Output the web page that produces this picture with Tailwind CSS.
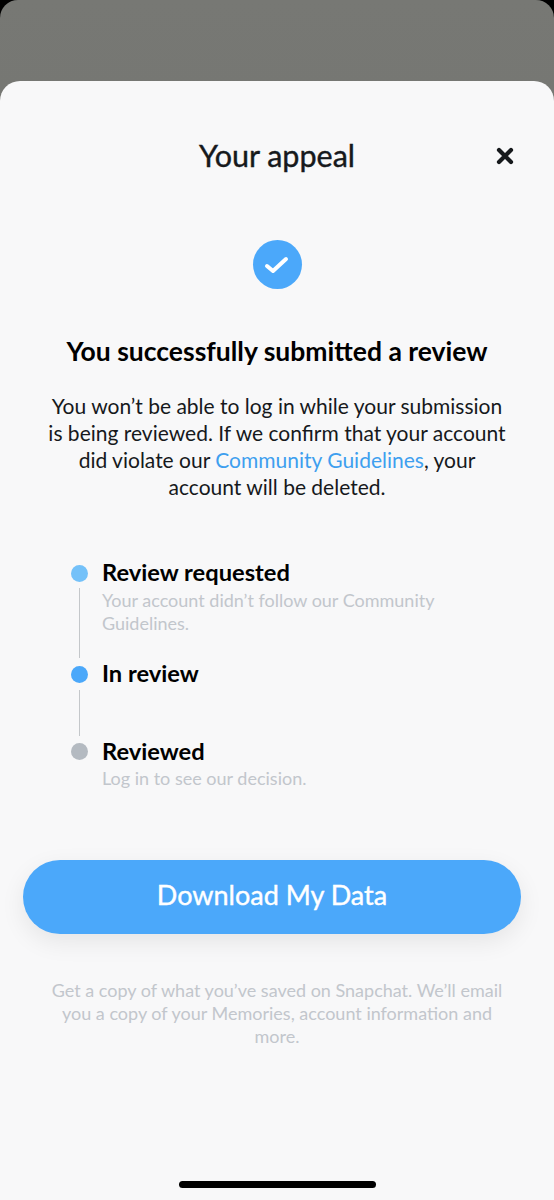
<!DOCTYPE html>
<html lang="en">
<head>
  <meta charset="UTF-8" />
  <meta name="viewport" content="width=device-width, initial-scale=1.0"/>
  <title>Your appeal</title>
  <script src="https://cdn.jsdelivr.net/npm/@tailwindcss/browser@4"></script>
</head>
<body class="bg-black font-['Lato','Noto_Sans',sans-serif]">
  <div class="relative h-[1200px] w-[554px] overflow-hidden rounded-t-[18px] bg-gradient-to-b from-[#777874] to-[#6a6b66] pt-[81px]">

    <!-- Sheet -->
    <div class="h-[1119px] rounded-t-[20px] bg-[#f8f8f9] text-center">

      <!-- Header -->
      <div class="relative h-[150px] pt-[55px]">
        <h1 class="text-[30.5px] leading-[38px] font-normal text-[#16191c] [-webkit-text-stroke:0.4px_#16191c]">Your appeal</h1>
        <button class="absolute top-[66px] left-[496px] text-[#16191c]">
          <svg class="h-[18px] w-[18px]" viewBox="0 0 18 18" fill="none" stroke="currentColor" stroke-width="4.2" stroke-linecap="round"><path d="M3 3l12 12M15 3L3 15"/></svg>
        </button>
      </div>

      <!-- Check -->
      <div class="mx-auto mt-[9px] flex h-[49px] w-[49px] items-center justify-center rounded-full bg-[#4ba8fa]">
        <svg class="h-[26px] w-[26px]" viewBox="0 0 26 26" fill="none" stroke="#fff" stroke-width="4" stroke-linecap="round" stroke-linejoin="round"><path d="M3 14l6 5L22 7"/></svg>
      </div>

      <h2 class="mt-[44px] text-[26.5px] leading-[36px] font-bold text-black">You successfully submitted a review</h2>

      <p class="mx-auto mt-[23px] w-[460px] text-[21px] leading-[27px] text-[#16191c]">You won’t be able to log in while your submission is being reviewed. If we confirm that your account did violate our <span class="text-[#3e9fef]">Community Guidelines</span>, your account will be deleted.</p>

      <!-- Timeline -->
      <div class="mt-[58px] ml-[71px] w-[390px] text-left">
        <div class="flex gap-[14px]">
          <div class="flex w-[17px] flex-col items-center">
            <span class="mt-[7px] h-[17px] w-[17px] rounded-full bg-[#74c1f9]"></span>
            <span class="mt-[6px] h-[70px] w-[1.5px] bg-[#c4c7ca]"></span>
          </div>
          <div>
            <div class="text-[23.7px] leading-[29px] font-bold text-black">Review requested</div>
            <p class="mt-[2px] text-[18px] leading-[23px] text-[#c2c6cc]">Your account didn’t follow our Community Guidelines.</p>
          </div>
        </div>
        <div class="flex gap-[14px]">
          <div class="flex w-[17px] flex-col items-center">
            <span class="mt-[8px] h-[17px] w-[17px] rounded-full bg-[#4ba8fa]"></span>
            <span class="mt-[7px] h-[46px] w-[1.5px] bg-[#c4c7ca]"></span>
          </div>
          <div class="mt-[1px] text-[23.7px] leading-[29px] font-bold text-black">In review</div>
        </div>
        <div class="flex gap-[14px]">
          <div class="w-[17px]">
            <span class="mt-[7px] block h-[17px] w-[17px] rounded-full bg-[#b4bac1]"></span>
          </div>
          <div>
            <div class="mt-[1px] text-[23.7px] leading-[29px] font-bold text-black">Reviewed</div>
            <p class="mt-[1px] text-[18px] leading-[23px] text-[#c2c6cc]">Log in to see our decision.</p>
          </div>
        </div>
      </div>

      <!-- Button -->
      <button class="mt-[70px] ml-[23px] block h-[74px] w-[498px] rounded-full bg-[#4ba8fa] pb-[3px] text-[27px] font-normal text-white shadow-[0_8px_24px_rgba(0,0,0,0.08)] [-webkit-text-stroke:0.4px_#fff]">Download My Data</button>

      <p class="mx-auto mt-[45px] w-[458px] text-[18px] leading-[23px] text-[#c2c6cc]">Get a copy of what you’ve saved on Snapchat. We’ll email you a copy of your Memories, account information and more.</p>
    </div>

    <!-- Home indicator -->
    <div class="absolute top-[1181px] left-[179px] h-[7px] w-[197px] rounded-full bg-black"></div>
  </div>
</body>
</html>
